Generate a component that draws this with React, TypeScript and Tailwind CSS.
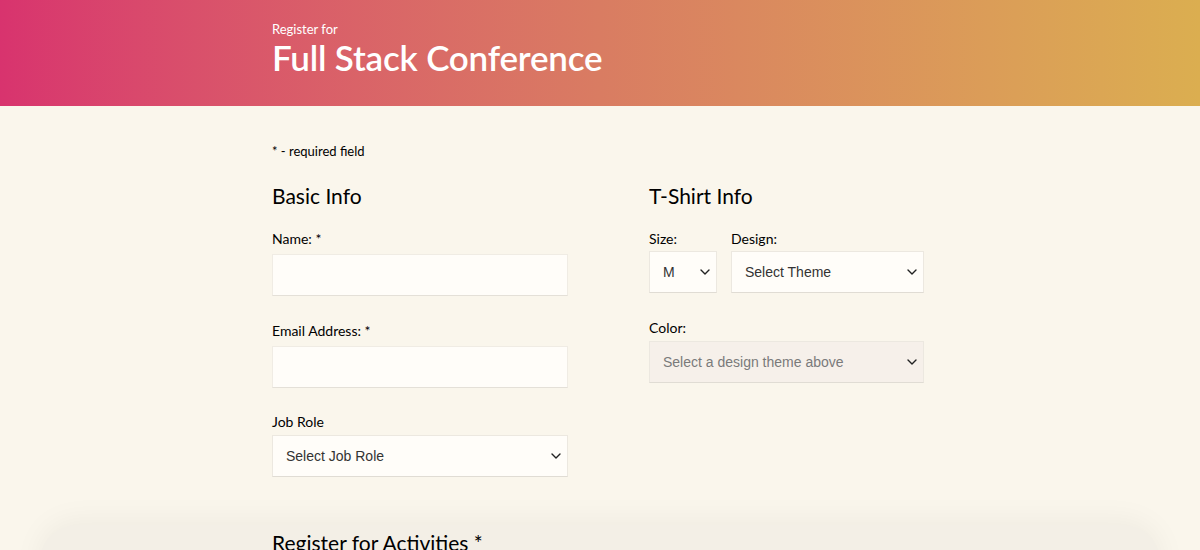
import React from 'react';

const Chevron = () => (
  <svg width="10" height="6" viewBox="0 0 10 6" fill="none" className="shrink-0">
    <path d="M1 1l4 4 4-4" stroke="#222" strokeWidth="1.4" strokeLinecap="round" strokeLinejoin="round" />
  </svg>
);

const Label = ({ children }: { children: React.ReactNode }) => (
  <label className="block text-[14px] text-black leading-none">{children}</label>
);

const TextInput = () => (
  <div className="h-[42px] w-full bg-[#fffdf9] border border-[#f0ece4] border-b-[#e4e0d8]" />
);

const Select = ({ text, className = '', muted = false }: { text: string; className?: string; muted?: boolean }) => (
  <div
    className={`h-[42px] flex items-center justify-between pl-[13px] pr-[6px] border border-[#ece8e0] border-b-[#e0dcd4] text-[14px] ${
      muted ? 'bg-[#f6f0ea] text-[#7a7a7a]' : 'bg-[#fffdf9] text-[#333]'
    } ${className}`}
    style={{ fontFamily: '"Liberation Sans", Arial, sans-serif' }}
  >
    <span>{text}</span>
    <Chevron />
  </div>
);

export default function App() {
  return (
    <div className="h-[550px] bg-[#faf6ec] overflow-hidden" style={{ fontFamily: 'Lato, "Noto Sans", sans-serif' }}>
      <header className="h-[106px] bg-gradient-to-r from-[#d8336e] via-[#d97c62] to-[#dbae50]">
        <div className="w-[656px] mx-auto pt-[21px] text-white">
          <p className="text-[13px] leading-4">Register for</p>
          <h1 className="mt-[1px] text-[35px] leading-[38px] font-semibold tracking-[-0.2px]">Full Stack Conference</h1>
        </div>
      </header>

      <main className="w-[656px] mx-auto pt-[33px]">
        <p className="text-[13px] text-black leading-6">* - required field</p>

        <div className="flex mt-[21px]">
          <section className="w-[296px]">
            <h2 className="text-[21px] leading-6 text-black">Basic Info</h2>
            <div className="mt-[24px]">
              <Label>Name: *</Label>
              <div className="mt-[8px]">
                <TextInput />
              </div>
            </div>
            <div className="mt-[28px]">
              <Label>Email Address: *</Label>
              <div className="mt-[8px]">
                <TextInput />
              </div>
            </div>
            <div className="mt-[27px]">
              <Label>Job Role</Label>
              <div className="mt-[6px]">
                <Select text="Select Job Role" className="w-full" />
              </div>
            </div>
          </section>

          <section className="ml-[81px] w-[275px]">
            <h2 className="text-[21px] leading-6 text-black">T-Shirt Info</h2>
            <div className="flex gap-[14px] mt-[24px]">
              <div className="w-[68px]">
                <Label>Size:</Label>
                <div className="mt-[5px]">
                  <Select text="M" className="w-[68px]" />
                </div>
              </div>
              <div className="w-[193px]">
                <Label>Design:</Label>
                <div className="mt-[5px]">
                  <Select text="Select Theme" className="w-[193px]" />
                </div>
              </div>
            </div>
            <div className="mt-[28px]">
              <Label>Color:</Label>
              <div className="mt-[6px]">
                <Select text="Select a design theme above" muted className="w-[275px]" />
              </div>
            </div>
          </section>
        </div>
      </main>

      <section className="mx-[40px] mt-[48px] rounded-t-[36px] bg-[#f3efe6] shadow-[0_-4px_30px_rgba(0,0,0,0.05)] h-[100px]">
        <div className="w-[656px] mx-auto pt-[6px]">
          <h2 className="text-[21px] leading-6 text-black">Register for Activities *</h2>
        </div>
      </section>
    </div>
  );
}
